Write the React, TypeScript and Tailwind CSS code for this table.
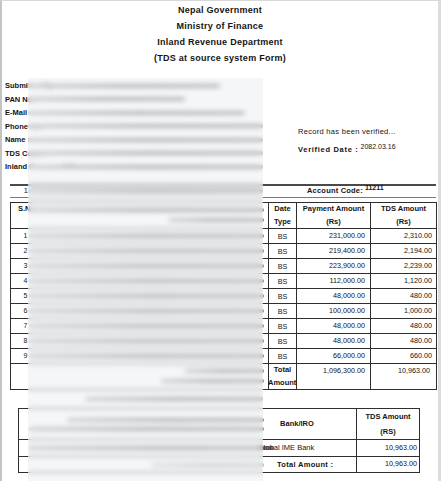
const info = [
  { label: "Submitted By :", bar: "w-[192px]" },
  { label: "PAN No :", bar: "w-[157px]" },
  { label: "E-Mail :", bar: "w-[217px]" },
  { label: "Phone No :", bar: "w-[235px]" },
  { label: "Name :", bar: "w-[235px]" },
  { label: "TDS Code :", bar: "w-[235px]" },
  { label: "Inland Revenue Office :", bar: "w-[235px]" },
];

const rows = [
  { sn: "1", pay: "231,000.00", tds: "2,310.00" },
  { sn: "2", pay: "219,400.00", tds: "2,194.00" },
  { sn: "3", pay: "223,900.00", tds: "2,239.00" },
  { sn: "4", pay: "112,000.00", tds: "1,120.00" },
  { sn: "5", pay: "48,000.00", tds: "480.00" },
  { sn: "6", pay: "100,000.00", tds: "1,000.00" },
  { sn: "7", pay: "48,000.00", tds: "480.00" },
  { sn: "8", pay: "48,000.00", tds: "480.00" },
  { sn: "9", pay: "66,000.00", tds: "660.00" },
];

// the smudge a redacted line of text leaves behind
function Smear({ className = "" }: { className?: string }) {
  return (
    <div
      className={`h-[4px] rounded-full bg-linear-to-r from-[#b0b0b0] via-[#7a7a7a] to-[#868686] ${className}`}
    />
  );
}

export default function App() {
  return (
    <div className="relative h-[481px] w-[441px] overflow-hidden border-t border-l-2 border-r-[3px] border-t-[#d8d8d8] border-l-[#c4c4c4] border-r-[#dcdcdc] bg-white font-['Liberation_Sans',Arial,sans-serif] text-[#141414]">
      <div className="pt-[1px] text-center text-[9px] font-bold leading-[16px] tracking-[0.25px]">
        <p>Nepal Government</p>
        <p>Ministry of Finance</p>
        <p>Inland Revenue Department</p>
        <p>(TDS at source system Form)</p>
      </div>

      <div className="mt-[13px] flex">
        <div className="w-[296px] pl-[3px] text-[7.5px] font-bold">
          {info.map((row) => (
            <div key={row.label} className="flex h-[13.5px] items-center">
              <span className="w-[30px] shrink-0 whitespace-nowrap">{row.label}</span>
              <Smear className={`-ml-[7px] ${row.bar}`} />
            </div>
          ))}
        </div>
        <div className="pt-[47px] text-[7.5px]">
          <p className="leading-[11px] tracking-[0.3px]">Record has been verified...</p>
          <p className="mt-[7px] flex items-start leading-[11px]">
            <span className="font-bold tracking-[0.7px]">Verified Date :</span>
            <span className="relative -top-[3px] ml-[2px] text-[7px]">2082.03.16</span>
          </p>
        </div>
      </div>

      <div className="mt-[10px] ml-[8px] mr-[2px]">
        <div className="h-[2px] bg-[#4a4a4a]" />
        <div className="flex h-[11px] items-center text-[7.5px]">
          <span className="w-[18px] text-right">1</span>
          <Smear className="w-[235px]" />
          <span className="ml-[44px] font-bold tracking-[0.2px]">Account Code:</span>
          <span className="relative -top-[3px] ml-[2px] text-[7px] font-bold">11211</span>
        </div>
        <div className="h-[1.5px] bg-[#7a7a7a]" />
      </div>

      <table className="mt-[4px] ml-[8px] w-[426px] table-fixed border-collapse border border-[#2e2e2e] text-[7.5px]">
        <colgroup>
          <col className="w-[18px]" />
          <col className="w-[240px]" />
          <col className="w-[28px]" />
          <col className="w-[74px]" />
          <col className="w-[66px]" />
        </colgroup>
        <thead>
          <tr className="h-[25px] align-top font-bold leading-[12.5px]">
            <td className="border-y border-[#2e2e2e] pl-[7px] whitespace-nowrap">S.N</td>
            <td className="border-y border-[#2e2e2e] pt-[5px]">
              <Smear className="w-[235px]" />
              <Smear className="mt-[6px] ml-[139px] w-[96px]" />
            </td>
            <td className="border border-[#2e2e2e] text-center">
              Date
              <br />
              Type
            </td>
            <td className="border border-[#2e2e2e] text-center">
              Payment Amount
              <br />
              (Rs)
            </td>
            <td className="border border-[#2e2e2e] text-center">
              TDS Amount
              <br />
              (Rs)
            </td>
          </tr>
        </thead>
        <tbody>
          {rows.map((r) => (
            <tr key={r.sn} className="h-[15px]">
              <td className="border-y border-[#2e2e2e] pr-[1px] text-right text-[7px]">{r.sn}</td>
              <td className="border-y border-[#2e2e2e]">
                <Smear className="w-[235px]" />
              </td>
              <td className="border border-[#2e2e2e] pt-[2px] text-center text-[7.2px]">BS</td>
              <td className="border border-[#2e2e2e] pr-[5px] text-right text-[7.2px]">{r.pay}</td>
              <td className="border border-[#2e2e2e] pr-[4px] text-right text-[7.2px]">{r.tds}</td>
            </tr>
          ))}
          <tr className="h-[25px] align-top leading-[12.5px]">
            <td className="border-y border-[#2e2e2e]" />
            <td className="border-y border-[#2e2e2e] pt-[5px]">
              <Smear className="ml-[155px] w-[80px]" />
              <Smear className="mt-[6px] ml-[132px] w-[103px]" />
            </td>
            <td className="border border-[#2e2e2e] text-center font-bold whitespace-nowrap">
              Total
              <br />
              <span className="-ml-[1px]">Amount</span>
            </td>
            <td className="border border-[#2e2e2e] pt-[1px] pr-[5px] text-right text-[7.2px]">
              1,096,300.00
            </td>
            <td className="border border-[#2e2e2e] pt-[1px] pr-[6px] text-right text-[7.2px]">
              10,963.00
            </td>
          </tr>
        </tbody>
      </table>

      <div className="flex h-[18px] items-center pl-[26px]">
        <Smear className="ml-[57px] w-[178px]" />
      </div>

      <table className="ml-[16px] w-[401px] table-fixed border-collapse border border-[#2e2e2e] text-[7.5px]">
        <colgroup>
          <col className="w-[338px]" />
          <col className="w-[63px]" />
        </colgroup>
        <tbody>
          <tr className="h-[30px]">
            <td className="border border-[#2e2e2e] p-0">
              <div className="flex items-center">
                <div className="w-[219px] pl-[10px]">
                  <Smear className="ml-[38px] w-[197px]" />
                  <Smear className="mt-[5px] w-[235px]" />
                </div>
                <div className="flex-1 text-center font-bold">Bank/IRO</div>
              </div>
            </td>
            <td className="border border-[#2e2e2e] text-center leading-[15px] font-bold">
              TDS Amount
              <br />
              (RS)
            </td>
          </tr>
          <tr className="h-[17px]">
            <td className="border border-[#2e2e2e] p-0">
              <div className="flex items-center">
                <div className="w-[219px] pl-[10px]">
                  <Smear className="w-[245px]" />
                </div>
                <div className="flex-1 pl-[20px]">Global IME Bank</div>
              </div>
            </td>
            <td className="border border-[#2e2e2e] pr-[2px] text-right text-[7.2px]">10,963.00</td>
          </tr>
          <tr className="h-[16px]">
            <td className="border border-[#2e2e2e] p-0">
              <div className="flex items-center">
                <div className="w-[219px] pl-[10px]">
                  <Smear className="ml-[122px] w-[113px] opacity-60" />
                </div>
                <div className="flex-1 pl-[39px] font-bold tracking-[0.3px]">Total Amount :</div>
              </div>
            </td>
            <td className="border border-[#2e2e2e] pr-[2px] text-right text-[7.2px]">10,963.00</td>
          </tr>
        </tbody>
      </table>

      {/* redaction blur laid over the names column */}
      <div className="absolute top-[77px] bottom-0 left-[26px] w-[235px] bg-[#eceef1]/50 backdrop-blur-[2.5px]" />
    </div>
  );
}
